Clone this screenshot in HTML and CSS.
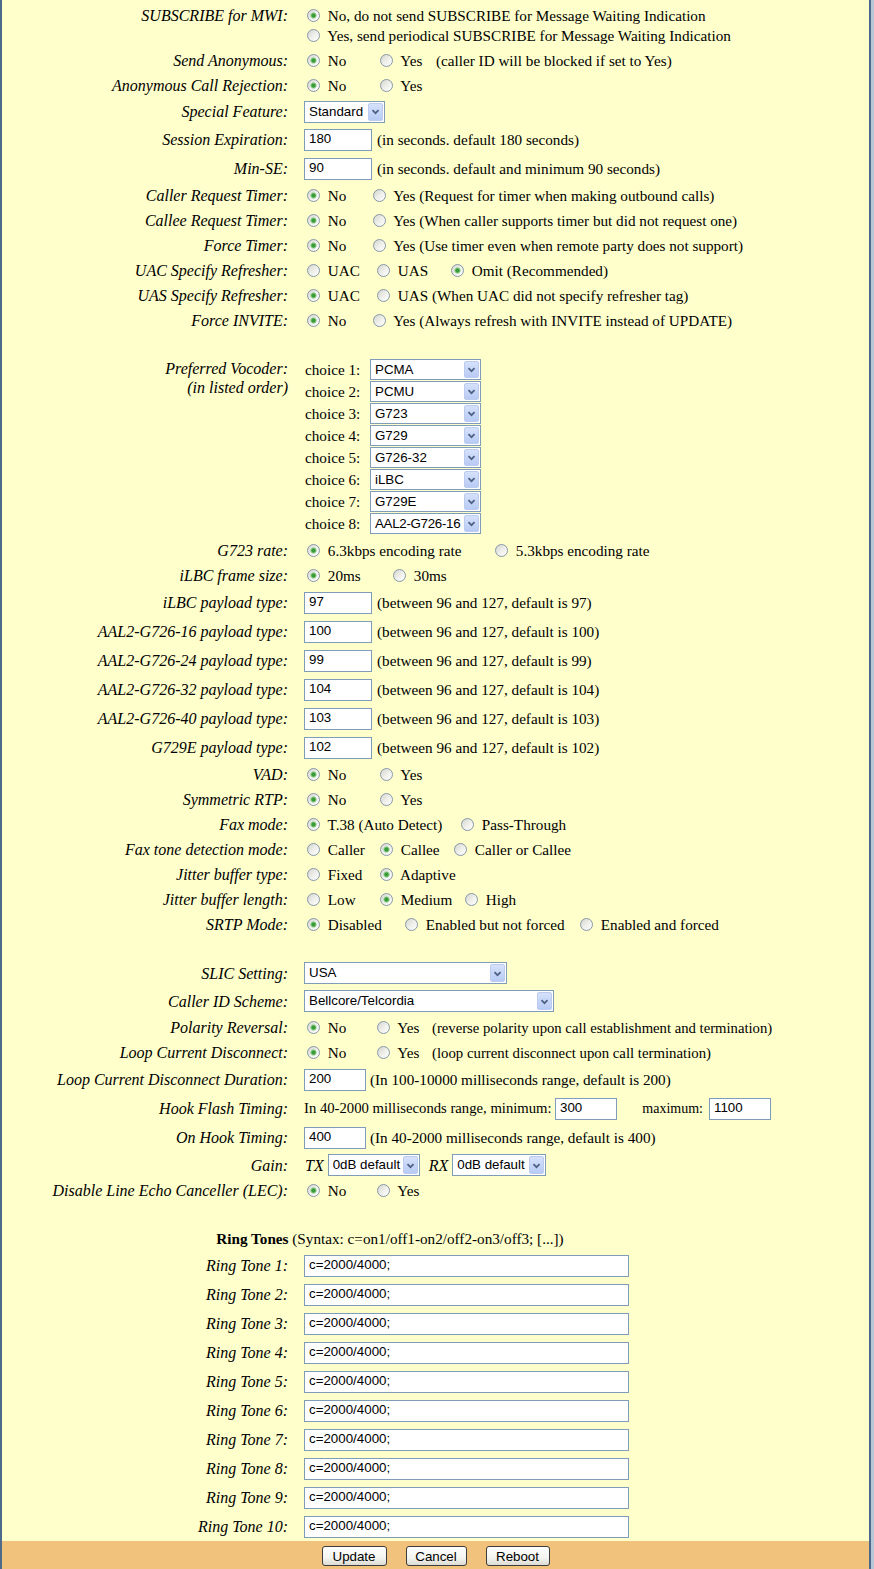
FILE: index.html
```html
<!DOCTYPE html>
<html>
<head>
<meta charset="utf-8">
<title>FXS Port Settings</title>
<link rel="stylesheet" href="styles.css">
</head>
<body>
<div class="page">
<div class="form">

<div class="row h45 top"><div class="lbl l20">SUBSCRIBE for MWI:</div><div class="val l20">
<div><label class="opt"><input type="radio" name="mwi" checked> No, do not send SUBSCRIBE for Message Waiting Indication</label></div>
<div><label class="opt"><input type="radio" name="mwi"> Yes, send periodical SUBSCRIBE for Message Waiting Indication</label></div>
</div></div>

<div class="row"><div class="lbl">Send Anonymous:</div><div class="val"><label class="opt w73"><input type="radio" name="anon" checked> No</label><label class="opt w59"><input type="radio" name="anon"> Yes</label>(caller ID will be blocked if set to Yes)</div></div>

<div class="row"><div class="lbl">Anonymous Call Rejection:</div><div class="val"><label class="opt w73"><input type="radio" name="acr" checked> No</label><label class="opt"><input type="radio" name="acr"> Yes</label></div></div>

<div class="row h27"><div class="lbl">Special Feature:</div><div class="val"><span class="dd w81"><select><option>Standard</option></select><span class="dd-btn"><svg viewBox="0 0 15 17" width="15" height="17"><path d="M4 7 L7.5 10.5 L11 7" fill="none" stroke="#4d6185" stroke-width="2"/></svg></span></span></div></div>

<div class="row h29"><div class="lbl">Session Expiration:</div><div class="val"><input class="txt w68" type="text" value="180"><span class="after">(in seconds. default 180 seconds)</span></div></div>

<div class="row h29"><div class="lbl">Min-SE:</div><div class="val"><input class="txt w68" type="text" value="90"><span class="after">(in seconds. default and minimum 90 seconds)</span></div></div>

<div class="row"><div class="lbl">Caller Request Timer:</div><div class="val"><label class="opt w66"><input type="radio" name="crt" checked> No</label><label class="opt"><input type="radio" name="crt"> Yes (Request for timer when making outbound calls)</label></div></div>

<div class="row"><div class="lbl">Callee Request Timer:</div><div class="val"><label class="opt w66"><input type="radio" name="cet" checked> No</label><label class="opt"><input type="radio" name="cet"> Yes (When caller supports timer but did not request one)</label></div></div>

<div class="row"><div class="lbl">Force Timer:</div><div class="val"><label class="opt w66"><input type="radio" name="ft" checked> No</label><label class="opt"><input type="radio" name="ft"> Yes (Use timer even when remote party does not support)</label></div></div>

<div class="row"><div class="lbl">UAC Specify Refresher:</div><div class="val"><label class="opt w70"><input type="radio" name="uac"> UAC</label><label class="opt w74"><input type="radio" name="uac"> UAS</label><label class="opt"><input type="radio" name="uac" checked> Omit (Recommended)</label></div></div>

<div class="row"><div class="lbl">UAS Specify Refresher:</div><div class="val"><label class="opt w70"><input type="radio" name="uas" checked> UAC</label><label class="opt"><input type="radio" name="uas"> UAS (When UAC did not specify refresher tag)</label></div></div>

<div class="row"><div class="lbl">Force INVITE:</div><div class="val"><label class="opt w66"><input type="radio" name="fi" checked> No</label><label class="opt"><input type="radio" name="fi"> Yes (Always refresh with INVITE instead of UPDATE)</label></div></div>

<div class="blank b25"></div>

<div class="row voc top"><div class="lbl">Preferred Vocoder:<br>(in listed order)</div><div class="val">
<div class="choices">
<span class="ch">choice 1:</span><span class="dd w111 short"><select><option>PCMA</option></select><span class="dd-btn"><svg viewBox="0 0 15 17" width="15" height="17"><path d="M4 7 L7.5 10.5 L11 7" fill="none" stroke="#4d6185" stroke-width="2"/></svg></span></span>
<span class="ch">choice 2:</span><span class="dd w111 short"><select><option>PCMU</option></select><span class="dd-btn"><svg viewBox="0 0 15 17" width="15" height="17"><path d="M4 7 L7.5 10.5 L11 7" fill="none" stroke="#4d6185" stroke-width="2"/></svg></span></span>
<span class="ch">choice 3:</span><span class="dd w111 short"><select><option>G723</option></select><span class="dd-btn"><svg viewBox="0 0 15 17" width="15" height="17"><path d="M4 7 L7.5 10.5 L11 7" fill="none" stroke="#4d6185" stroke-width="2"/></svg></span></span>
<span class="ch">choice 4:</span><span class="dd w111 short"><select><option>G729</option></select><span class="dd-btn"><svg viewBox="0 0 15 17" width="15" height="17"><path d="M4 7 L7.5 10.5 L11 7" fill="none" stroke="#4d6185" stroke-width="2"/></svg></span></span>
<span class="ch">choice 5:</span><span class="dd w111 short"><select><option>G726-32</option></select><span class="dd-btn"><svg viewBox="0 0 15 17" width="15" height="17"><path d="M4 7 L7.5 10.5 L11 7" fill="none" stroke="#4d6185" stroke-width="2"/></svg></span></span>
<span class="ch">choice 6:</span><span class="dd w111 short"><select><option>iLBC</option></select><span class="dd-btn"><svg viewBox="0 0 15 17" width="15" height="17"><path d="M4 7 L7.5 10.5 L11 7" fill="none" stroke="#4d6185" stroke-width="2"/></svg></span></span>
<span class="ch">choice 7:</span><span class="dd w111 short"><select><option>G729E</option></select><span class="dd-btn"><svg viewBox="0 0 15 17" width="15" height="17"><path d="M4 7 L7.5 10.5 L11 7" fill="none" stroke="#4d6185" stroke-width="2"/></svg></span></span>
<span class="ch">choice 8:</span><span class="dd w111 short"><select class="tight"><option>AAL2-G726-16</option></select><span class="dd-btn"><svg viewBox="0 0 15 17" width="15" height="17"><path d="M4 7 L7.5 10.5 L11 7" fill="none" stroke="#4d6185" stroke-width="2"/></svg></span></span>
</div>
</div></div>

<div class="row"><div class="lbl">G723 rate:</div><div class="val"><label class="opt w188"><input type="radio" name="g723" checked> 6.3kbps encoding rate</label><label class="opt"><input type="radio" name="g723"> 5.3kbps encoding rate</label></div></div>

<div class="row"><div class="lbl">iLBC frame size:</div><div class="val"><label class="opt w86"><input type="radio" name="ilbc" checked> 20ms</label><label class="opt"><input type="radio" name="ilbc"> 30ms</label></div></div>

<div class="row h29"><div class="lbl">iLBC payload type:</div><div class="val"><input class="txt w68" type="text" value="97"><span class="after">(between 96 and 127, default is 97)</span></div></div>
<div class="row h29"><div class="lbl">AAL2-G726-16 payload type:</div><div class="val"><input class="txt w68" type="text" value="100"><span class="after">(between 96 and 127, default is 100)</span></div></div>
<div class="row h29"><div class="lbl">AAL2-G726-24 payload type:</div><div class="val"><input class="txt w68" type="text" value="99"><span class="after">(between 96 and 127, default is 99)</span></div></div>
<div class="row h29"><div class="lbl">AAL2-G726-32 payload type:</div><div class="val"><input class="txt w68" type="text" value="104"><span class="after">(between 96 and 127, default is 104)</span></div></div>
<div class="row h29"><div class="lbl">AAL2-G726-40 payload type:</div><div class="val"><input class="txt w68" type="text" value="103"><span class="after">(between 96 and 127, default is 103)</span></div></div>
<div class="row h29"><div class="lbl">G729E payload type:</div><div class="val"><input class="txt w68" type="text" value="102"><span class="after">(between 96 and 127, default is 102)</span></div></div>

<div class="row"><div class="lbl">VAD:</div><div class="val"><label class="opt w73"><input type="radio" name="vad" checked> No</label><label class="opt"><input type="radio" name="vad"> Yes</label></div></div>

<div class="row"><div class="lbl">Symmetric RTP:</div><div class="val"><label class="opt w73"><input type="radio" name="srtp" checked> No</label><label class="opt"><input type="radio" name="srtp"> Yes</label></div></div>

<div class="row"><div class="lbl">Fax mode:</div><div class="val"><label class="opt w154"><input type="radio" name="fax" checked> T.38 (Auto Detect)</label><label class="opt"><input type="radio" name="fax"> Pass-Through</label></div></div>

<div class="row"><div class="lbl">Fax tone detection mode:</div><div class="val"><label class="opt w73"><input type="radio" name="ftd"> Caller</label><label class="opt w74"><input type="radio" name="ftd" checked> Callee</label><label class="opt"><input type="radio" name="ftd"> Caller or Callee</label></div></div>

<div class="row"><div class="lbl">Jitter buffer type:</div><div class="val"><label class="opt w73"><input type="radio" name="jbt"> Fixed</label><label class="opt"><input type="radio" name="jbt" checked> Adaptive</label></div></div>

<div class="row"><div class="lbl">Jitter buffer length:</div><div class="val"><label class="opt w73"><input type="radio" name="jbl"> Low</label><label class="opt w85"><input type="radio" name="jbl" checked> Medium</label><label class="opt"><input type="radio" name="jbl"> High</label></div></div>

<div class="row"><div class="lbl">SRTP Mode:</div><div class="val"><label class="opt w98"><input type="radio" name="srtpm" checked> Disabled</label><label class="opt w175"><input type="radio" name="srtpm"> Enabled but not forced</label><label class="opt"><input type="radio" name="srtpm"> Enabled and forced</label></div></div>

<div class="blank b22"></div>

<div class="row h28"><div class="lbl">SLIC Setting:</div><div class="val"><span class="dd w203"><select><option>USA</option></select><span class="dd-btn"><svg viewBox="0 0 15 17" width="15" height="17"><path d="M4 7 L7.5 10.5 L11 7" fill="none" stroke="#4d6185" stroke-width="2"/></svg></span></span></div></div>

<div class="row h28"><div class="lbl">Caller ID Scheme:</div><div class="val"><span class="dd w250"><select><option>Bellcore/Telcordia</option></select><span class="dd-btn"><svg viewBox="0 0 15 17" width="15" height="17"><path d="M4 7 L7.5 10.5 L11 7" fill="none" stroke="#4d6185" stroke-width="2"/></svg></span></span></div></div>

<div class="row"><div class="lbl">Polarity Reversal:</div><div class="val"><label class="opt w70"><input type="radio" name="pol" checked> No</label><label class="opt w58"><input type="radio" name="pol"> Yes</label><span class="sm">(reverse polarity upon call establishment and termination)</span></div></div>

<div class="row"><div class="lbl">Loop Current Disconnect:</div><div class="val"><label class="opt w70"><input type="radio" name="lcd" checked> No</label><label class="opt w58"><input type="radio" name="lcd"> Yes</label><span class="sm2">(loop current disconnect upon call termination)</span></div></div>

<div class="row h29"><div class="lbl">Loop Current Disconnect Duration:</div><div class="val"><input class="txt w62" type="text" value="200"><span class="after a4">(In 100-10000 milliseconds range, default is 200)</span></div></div>

<div class="row h29"><div class="lbl">Hook Flash Timing:</div><div class="val"><span class="hf1">In 40-2000 milliseconds range, minimum:</span><input class="txt w62" type="text" value="300"><span class="hf2">maximum:</span><input class="txt w62" type="text" value="1100"></div></div>

<div class="row h29"><div class="lbl">On Hook Timing:</div><div class="val"><input class="txt w62" type="text" value="400"><span class="after a4">(In 40-2000 milliseconds range, default is 400)</span></div></div>

<div class="row h26"><div class="lbl">Gain:</div><div class="val"><span class="it tx">TX</span><span class="dd w92"><select><option>0dB default</option></select><span class="dd-btn"><svg viewBox="0 0 15 17" width="15" height="17"><path d="M4 7 L7.5 10.5 L11 7" fill="none" stroke="#4d6185" stroke-width="2"/></svg></span></span><span class="it rx">RX</span><span class="dd w94"><select><option>0dB default</option></select><span class="dd-btn"><svg viewBox="0 0 15 17" width="15" height="17"><path d="M4 7 L7.5 10.5 L11 7" fill="none" stroke="#4d6185" stroke-width="2"/></svg></span></span></div></div>

<div class="row"><div class="lbl">Disable Line Echo Canceller (LEC):</div><div class="val"><label class="opt w70"><input type="radio" name="lec" checked> No</label><label class="opt"><input type="radio" name="lec"> Yes</label></div></div>

<div class="blank b23"></div>

<div class="rt-head"><b>Ring Tones</b> (Syntax: c=on1/off1-on2/off2-on3/off3; [...])</div>

<div class="row h29"><div class="lbl">Ring Tone 1:</div><div class="val"><input class="txt w325" type="text" value="c=2000/4000;"></div></div>
<div class="row h29"><div class="lbl">Ring Tone 2:</div><div class="val"><input class="txt w325" type="text" value="c=2000/4000;"></div></div>
<div class="row h29"><div class="lbl">Ring Tone 3:</div><div class="val"><input class="txt w325" type="text" value="c=2000/4000;"></div></div>
<div class="row h29"><div class="lbl">Ring Tone 4:</div><div class="val"><input class="txt w325" type="text" value="c=2000/4000;"></div></div>
<div class="row h29"><div class="lbl">Ring Tone 5:</div><div class="val"><input class="txt w325" type="text" value="c=2000/4000;"></div></div>
<div class="row h29"><div class="lbl">Ring Tone 6:</div><div class="val"><input class="txt w325" type="text" value="c=2000/4000;"></div></div>
<div class="row h29"><div class="lbl">Ring Tone 7:</div><div class="val"><input class="txt w325" type="text" value="c=2000/4000;"></div></div>
<div class="row h29"><div class="lbl">Ring Tone 8:</div><div class="val"><input class="txt w325" type="text" value="c=2000/4000;"></div></div>
<div class="row h29"><div class="lbl">Ring Tone 9:</div><div class="val"><input class="txt w325" type="text" value="c=2000/4000;"></div></div>
<div class="row h29"><div class="lbl">Ring Tone 10:</div><div class="val"><input class="txt w325" type="text" value="c=2000/4000;"></div></div>

</div>
<div class="footer">
<button class="btn b-upd" type="button">Update</button>
<button class="btn b-can" type="button">Cancel</button>
<button class="btn b-reb" type="button">Reboot</button>
</div>
</div>
</body>
</html>
```

FILE: styles.css
```css
html, body {
  margin: 0;
  padding: 0;
  height: 1569px;
  overflow: hidden;
}
body {
  background: #b7c7d8;
  font-family: "Liberation Serif", "Times New Roman", serif;
  color: #000;
}
.page {
  width: 867px;
  height: 1569px;
  border-left: 2px solid #4e6a8b;
  border-right: 2px solid #4e6a8b;
  background: #ffffcc;
  display: flex;
  flex-direction: column;
}
.form {
  padding-top: 3px;
  flex: 1;
}
.row {
  display: grid;
  grid-template-columns: 286px 1fr;
  column-gap: 16px;
  align-items: center;
  height: 25px;
}
.row.h26 { height: 26px; }
.row.h27 { height: 27px; }
.row.h28 { height: 28px; }
.row.h29 { height: 29px; }
.row.h45 { height: 45px; }
.row.top { align-items: start; }
.row.h45.top { padding-top: 3px; height: 42px; }
.row.voc { height: 179px; padding-top: 1px; }
.blank.b25 { height: 25px; }
.blank.b22 { height: 22px; }
.blank.b23 { height: 23px; }

.lbl {
  font-style: italic;
  font-size: 16px;
  text-align: right;
  white-space: nowrap;
  line-height: 19px;
}
.val {
  font-size: 15.2px;
  white-space: nowrap;
  line-height: 19px;
}
.l20 { line-height: 20px; }
.sm { font-size: 14.7px; }
.sm2 { font-size: 14.8px; }

.opt {
  display: inline-block;
  white-space: nowrap;
}
.w58 { width: 58px; }
.w59 { width: 59px; }
.w66 { width: 66px; }
.w70 { width: 70px; }
.w73 { width: 73px; }
.w74 { width: 74px; }
.w85 { width: 85px; }
.w86 { width: 86px; }
.w98 { width: 98px; }
.w154 { width: 154px; }
.w175 { width: 175px; }
.w188 { width: 188px; }

input[type="radio"] {
  appearance: none;
  -webkit-appearance: none;
  box-sizing: border-box;
  width: 13px;
  height: 13px;
  margin: 0 4px 0 3px;
  border: 1px solid #8797a8;
  border-radius: 50%;
  background: linear-gradient(135deg, #d6d6cf 0%, #eeeeea 50%, #ffffff 100%);
  vertical-align: -1px;
}
input[type="radio"]:checked {
  background:
    radial-gradient(circle at 50% 50%, #3a9b3a 0, #3a9b3a 1.6px, #93cf8f 2.6px, rgba(255,255,255,0) 3.6px),
    linear-gradient(135deg, #d6d6cf 0%, #eeeeea 50%, #ffffff 100%);
}

.txt {
  box-sizing: border-box;
  height: 22px;
  border: 1px solid #7f9db9;
  background: #fff;
  font-family: "Liberation Sans", Arial, sans-serif;
  font-size: 13.33px;
  color: #000;
  padding: 0 3px 2px 4px;
  margin: 0;
  vertical-align: middle;
  border-radius: 0;
  outline: none;
}
.w62 { width: 62px; }
.w68 { width: 68px; }
.w325 { width: 325px; }
.after { margin-left: 5px; vertical-align: middle; }
.after.a4 { margin-left: 4px; }

.hf1 {
  display: inline-block;
  width: 251px;
  font-size: 14.7px;
  vertical-align: middle;
}
.hf2 {
  display: inline-block;
  width: 92px;
  padding-right: 6px;
  box-sizing: border-box;
  text-align: right;
  font-size: 14px;
  vertical-align: middle;
}

.dd {
  position: relative;
  display: inline-block;
  vertical-align: middle;
  height: 22px;
}
.dd select {
  appearance: none;
  -webkit-appearance: none;
  box-sizing: border-box;
  width: 100%;
  height: 22px;
  margin: 0;
  border: 1px solid #7f9db9;
  border-radius: 0;
  background: #fff;
  font-family: "Liberation Sans", Arial, sans-serif;
  font-size: 13.33px;
  color: #000;
  padding: 0 18px 1px 4px;
  outline: none;
  display: block;
}
.dd select.tight { padding-right: 14px; letter-spacing: -0.3px; }
.dd.short, .dd.short select { height: 21px; }
.dd-btn {
  position: absolute;
  top: 2px;
  right: 2px;
  bottom: 2px;
  width: 15px;
  box-sizing: border-box;
  border: 1px solid #bccbf0;
  border-radius: 2px;
  background: linear-gradient(#d6e1fb, #b8cbf4);
  display: flex;
  align-items: center;
  justify-content: center;
}
.dd-btn svg { display: block; width: 13px; height: 15px; }
.w81 { width: 81px; }
.w92 { width: 92px; }
.w94 { width: 94px; }
.w111 { width: 111px; }
.w203 { width: 203px; }
.w250 { width: 250px; }

.choices {
  display: grid;
  grid-template-columns: 66px 111px;
  grid-auto-rows: 22px;
  align-items: start;
}
.ch { padding-left: 1px; line-height: 21px; }

.it {
  font-style: italic;
  font-size: 16px;
  vertical-align: middle;
}
.tx { margin-left: 1px; margin-right: 4px; }
.rx { margin-left: 9px; margin-right: 4px; }

.rt-head {
  width: 776px;
  height: 25px;
  line-height: 25px;
  text-align: center;
  font-size: 15.2px;
  white-space: nowrap;
}

.footer {
  height: 28px;
  box-sizing: border-box;
  padding-top: 2px;
  background: #f1c27b;
  display: flex;
  justify-content: center;
  align-items: center;
  gap: 19px;
}
.btn {
  box-sizing: border-box;
  height: 20px;
  padding: 0;
  margin: 0;
  border: 1px solid #3c3c3c;
  border-radius: 3px;
  background: linear-gradient(#ffffff 0%, #f4f4f0 60%, #dcdcd4 100%);
  font-family: "Liberation Sans", Arial, sans-serif;
  font-size: 13.33px;
  color: #000;
}
.b-upd { width: 65px; }
.b-can { width: 61px; }
.b-reb { width: 64px; }
```
